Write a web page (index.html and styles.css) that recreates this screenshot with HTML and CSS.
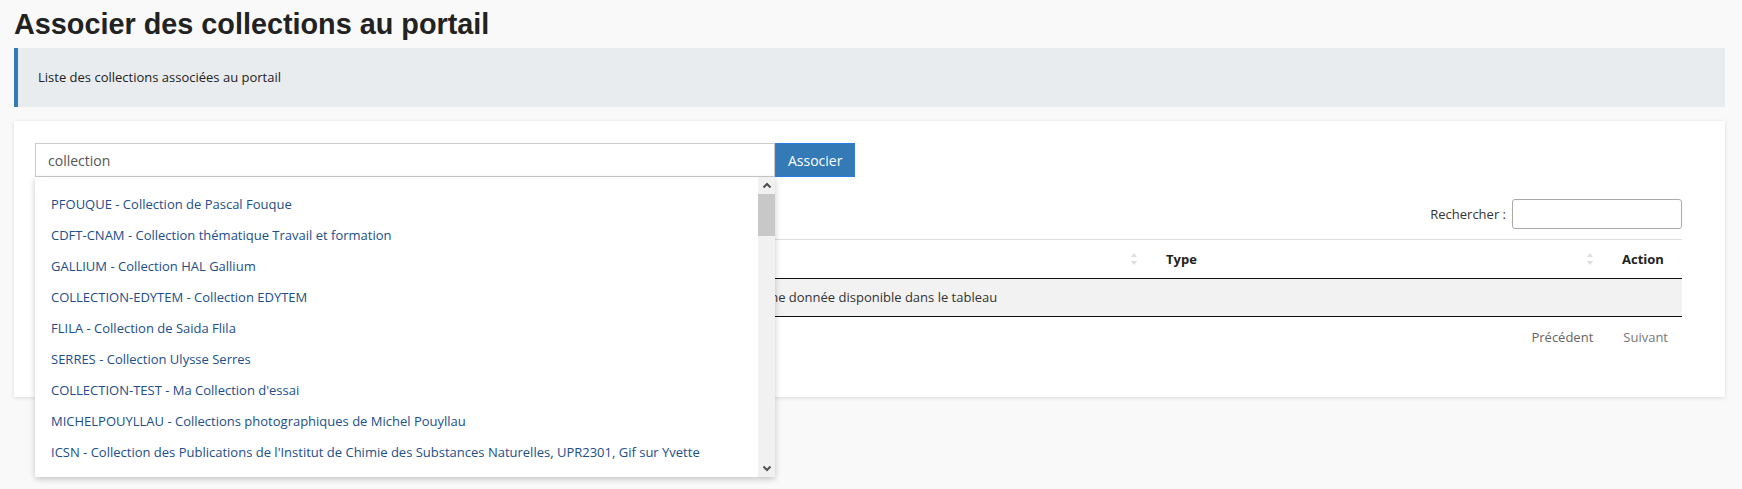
FILE: index.html
```html
<!DOCTYPE html>
<html lang="fr">
<head>
<meta charset="utf-8">
<title>Associer des collections au portail</title>
<link rel="stylesheet" href="styles.css">
</head>
<body>
<div class="page">
  <h1 class="title">Associer des collections au portail</h1>
  <div class="info">Liste des collections associées au portail</div>
  <div class="card">
    <div class="assoc">
      <div class="combo">
        <input class="assoc-input" type="text" value="collection">
        <div class="suggest">
          <ul class="suggest-list">
            <li>PFOUQUE - Collection de Pascal Fouque</li>
            <li>CDFT-CNAM - Collection thématique Travail et formation</li>
            <li>GALLIUM - Collection HAL Gallium</li>
            <li>COLLECTION-EDYTEM - Collection EDYTEM</li>
            <li>FLILA - Collection de Saida Flila</li>
            <li>SERRES - Collection Ulysse Serres</li>
            <li>COLLECTION-TEST - Ma Collection d'essai</li>
            <li>MICHELPOUYLLAU - Collections photographiques de Michel Pouyllau</li>
            <li>ICSN - Collection des Publications de l'Institut de Chimie des Substances Naturelles, UPR2301, Gif sur Yvette</li>
          </ul>
          <div class="sbar">
            <div class="sbar-btn">
              <svg width="10" height="7" viewBox="0 0 10 7"><path d="M1.5 5.5 L5 2 L8.5 5.5" fill="none" stroke="#505050" stroke-width="2"/></svg>
            </div>
            <div class="sbar-track">
              <div class="sbar-thumb"></div>
            </div>
            <div class="sbar-btn">
              <svg width="10" height="7" viewBox="0 0 10 7"><path d="M1.5 1.5 L5 5 L8.5 1.5" fill="none" stroke="#505050" stroke-width="2"/></svg>
            </div>
          </div>
        </div>
      </div>
      <button class="btn" type="button">Associer</button>
    </div>

    <div class="dt">
      <div class="dt-top">
        <label class="dt-filter">Rechercher :<input class="dt-search" type="search"></label>
      </div>
      <table class="dt-table">
        <thead>
          <tr>
            <th class="col-name"><div class="th-inner"><span></span>
              <svg class="sort" width="8" height="14" viewBox="0 0 8 14"><path d="M4 1 L7 5 L1 5 Z" fill="#dedede"/><path d="M4 13 L7 9 L1 9 Z" fill="#dedede"/></svg></div></th>
            <th class="col-type"><div class="th-inner"><span>Type</span>
              <svg class="sort" width="8" height="14" viewBox="0 0 8 14"><path d="M4 1 L7 5 L1 5 Z" fill="#dedede"/><path d="M4 13 L7 9 L1 9 Z" fill="#dedede"/></svg></div></th>
            <th class="col-action">Action</th>
          </tr>
        </thead>
        <tbody>
          <tr class="odd">
            <td class="empty" colspan="3">Aucune donnée disponible dans le tableau</td>
          </tr>
        </tbody>
      </table>
      <div class="dt-bottom">
        <span class="pg pg-prev">Précédent</span>
        <span class="pg pg-next">Suivant</span>
      </div>
    </div>
  </div>
</div>
</body>
</html>
```
FILE: styles.css
```css
html, body {
  margin: 0;
  padding: 0;
  background: #f9f9f9;
}

body {
  font-family: "Open Sans", "Noto Sans", sans-serif;
  font-size: 13px;
  color: #333;
}

.page {
  box-sizing: border-box;
  min-height: 100vh;
  padding: 6px 17px 0 14px;
}

.title {
  margin: 0 0 6px 0;
  font-family: "Liberation Sans", Arial, sans-serif;
  font-weight: bold;
  font-size: 28.8px;
  line-height: 36px;
  color: #222;
}

.info {
  background: #e9ecef;
  border-left: 4px solid #337ab7;
  padding: 20px 20px;
  line-height: 19px;
  color: #222;
}

.card {
  margin-top: 14px;
  background: #fff;
  box-shadow: 0 1px 4px rgba(0, 0, 0, 0.12);
  padding: 22px 43px 50px 21px;
}

.assoc {
  display: flex;
}

.combo {
  position: relative;
  width: 740px;
}

.assoc-input {
  box-sizing: border-box;
  width: 740px;
  height: 34px;
  margin: 0;
  border: 1px solid #cccccc;
  border-radius: 0;
  padding: 0 12px;
  font-family: "Open Sans", sans-serif;
  font-size: 14px;
  color: #555;
  background: #fff;
  outline: none;
}

.btn {
  box-sizing: border-box;
  height: 34px;
  margin: 0;
  padding: 0 12px;
  background: #337ab7;
  border: 1px solid #2a7de1;
  color: #fff;
  font-family: "Open Sans", sans-serif;
  font-size: 14px;
  cursor: pointer;
}

.suggest {
  position: absolute;
  top: 100%;
  left: 0;
  width: 740px;
  height: 300px;
  background: #fff;
  box-shadow: 0 2px 6px rgba(0, 0, 0, 0.22);
  display: flex;
  z-index: 10;
}

.suggest-list {
  flex: 1;
  list-style: none;
  margin: 0;
  padding: 12px 0 8px 0;
  overflow: hidden;
}

.suggest-list li {
  height: 31px;
  line-height: 31px;
  padding: 0 16px;
  color: #214e8a;
  white-space: nowrap;
}

.sbar {
  width: 17px;
  display: flex;
  flex-direction: column;
  background: #f1f1f1;
}

.sbar-btn {
  height: 17px;
  display: flex;
  align-items: center;
  justify-content: center;
}

.sbar-track {
  flex: 1;
}

.sbar-thumb {
  height: 42px;
  background: #c8c8c8;
}

.dt {
  margin-top: 22px;
}

.dt-top {
  display: flex;
  justify-content: flex-end;
  margin-bottom: 10px;
}

.dt-filter {
  display: flex;
  align-items: center;
  color: #333;
}

.dt-search {
  box-sizing: border-box;
  width: 170px;
  height: 30px;
  margin: 0 0 0 6px;
  border: 1px solid #aaa;
  border-radius: 3px;
  padding: 4px;
  background: #fff;
}

.dt-table {
  width: 100%;
  border-collapse: separate;
  border-spacing: 0;
}

.dt-table th {
  text-align: left;
  font-weight: bold;
  color: #222;
  padding: 10px 18px 10px 10px;
  line-height: 18px;
  border-top: 1px solid #dddddd;
  border-bottom: 1px solid #111;
}

.th-inner {
  display: flex;
  align-items: center;
  justify-content: space-between;
}

.col-name {
  width: 1093px;
}

.col-type {
  width: 428px;
}

.dt-table td {
  padding: 10px;
  line-height: 17px;
  border-bottom: 1px solid #111;
}

.dt-table tr.odd td {
  background: #f2f2f2;
}

.empty {
  text-align: center;
  color: #333;
  padding-left: 30px !important;
}

.dt-bottom {
  display: flex;
  justify-content: flex-end;
  padding-top: 11px;
  line-height: 19px;
}

.pg {
  padding: 0 14px;
  margin-left: 2px;
  color: #666;
}

.pg-next {
  color: #777;
}
```
